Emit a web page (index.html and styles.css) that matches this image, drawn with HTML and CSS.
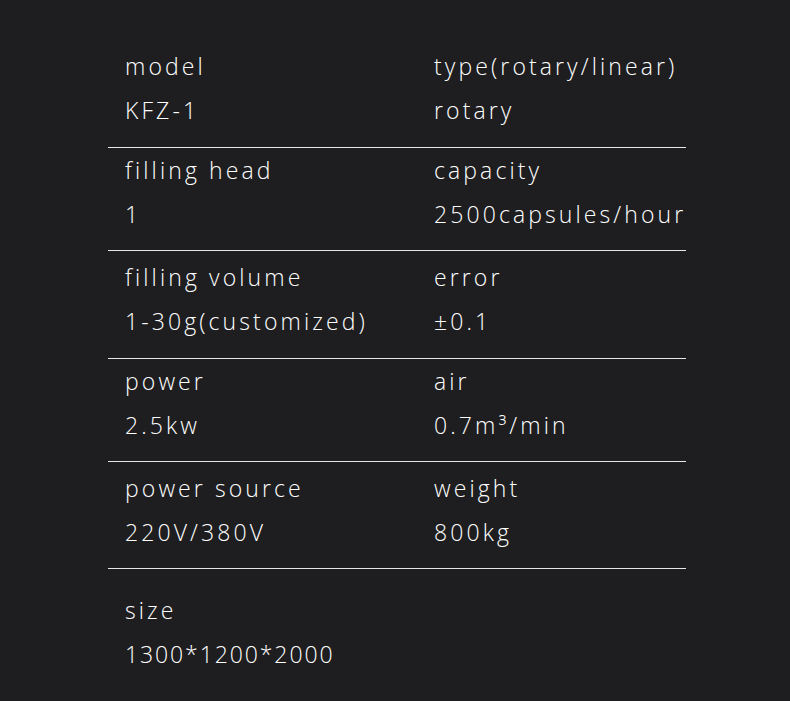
FILE: index.html
```html
<!DOCTYPE html>
<html>
<head>
<meta charset="utf-8">
<link rel="stylesheet" href="styles.css">
</head>
<body>
<div class="specs">
  <div class="row first">
    <div class="cell"><div class="label">model</div><div class="value">KFZ-1</div></div>
    <div class="cell"><div class="label">type(rotary/linear)</div><div class="value">rotary</div></div>
  </div>
  <div class="row">
    <div class="cell"><div class="label">filling head</div><div class="value">1</div></div>
    <div class="cell"><div class="label">capacity</div><div class="value">2500capsules/hour</div></div>
  </div>
  <div class="row tall">
    <div class="cell"><div class="label">filling volume</div><div class="value">1-30g(customized)</div></div>
    <div class="cell"><div class="label">error</div><div class="value">±0.1</div></div>
  </div>
  <div class="row">
    <div class="cell"><div class="label">power</div><div class="value">2.5kw</div></div>
    <div class="cell"><div class="label">air</div><div class="value">0.7m³/min</div></div>
  </div>
  <div class="row tall five">
    <div class="cell"><div class="label">power source</div><div class="value">220V/380V</div></div>
    <div class="cell"><div class="label">weight</div><div class="value">800kg</div></div>
  </div>
  <div class="row last">
    <div class="cell"><div class="label">size</div><div class="value digits">1300*1200*2000</div></div>
  </div>
</div>
</body>
</html>
```
FILE: styles.css
```css
html, body {
  margin: 0;
  padding: 0;
  background: #1e1e20;
}
body {
  width: 790px;
  height: 701px;
  overflow: hidden;
  color: #ffffff;
  font-family: "Open Sans", "Noto Sans", "Noto Sans CJK SC", sans-serif;
  font-weight: 350;
  font-size: 23px;
  letter-spacing: 3.1px;
}
.specs {
  margin-left: 108px;
  width: 578px;
  padding-top: 44px;
}
.row {
  display: grid;
  grid-template-columns: 309px 1fr;
  padding: 0 0 14px 17px;
  border-bottom: 1px solid #e6e6e6;
}
.row.first {
  padding-bottom: 15px;
}
.row.tall {
  padding-top: 4px;
  padding-bottom: 15px;
}
.row.five {
  padding-bottom: 14px;
}
.row.last {
  border-bottom: none;
  padding-top: 19px;
}
.label, .value {
  line-height: 44px;
  white-space: nowrap;
}
.value.digits {
  letter-spacing: 1.9px;
}
```
